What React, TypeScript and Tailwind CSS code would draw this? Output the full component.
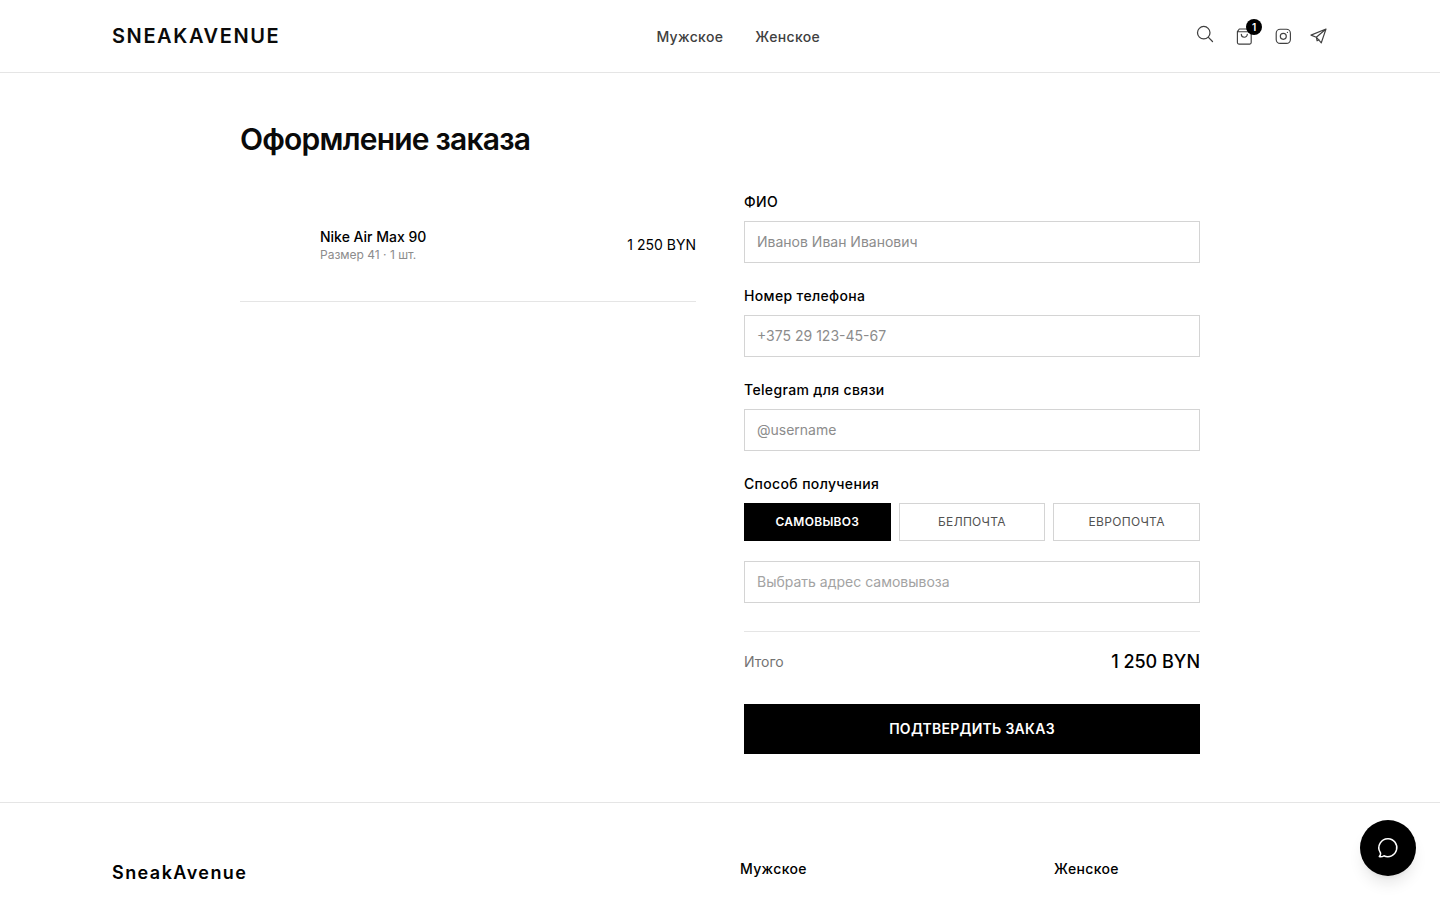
import React from 'react';

const stroke = { fill: 'none', stroke: 'currentColor', strokeWidth: 1.5, strokeLinecap: 'round', strokeLinejoin: 'round' } as const;
const thin = { ...stroke, strokeWidth: 1.15 } as const;

function Field({ label, placeholder }: { label: string; placeholder: string }) {
  return (
    <label className="flex flex-col">
      <span className="h-5 text-sm leading-5 font-medium tracking-[0.35px] text-black">{label}</span>
      <input className="mt-[9px] h-[42px] w-full border border-[#d4d4d4] px-3 pb-0.5 text-sm text-black outline-none placeholder:text-[#8c8c8c]" placeholder={placeholder} />
    </label>
  );
}

function Header() {
  return (
    <header className="h-[73px] border-b border-[#e5e5e5]">
      <div className="mx-auto flex h-[72px] w-[1216px] items-center">
        <a className="w-[544px] text-xl leading-7 font-semibold tracking-[1.6px] text-[#0a0a0a]">SNEAKAVENUE</a>
        <nav className="flex gap-8 pt-0.5 pl-[0.4px] text-sm leading-5 font-medium tracking-[0.35px] text-[#404040]">
          <a>Мужское</a>
          <a>Женское</a>
        </nav>
        <div className="ml-auto flex items-center text-[#404040]">
          <svg className="mr-5 mb-[5px] size-5" viewBox="0 0 24 24" {...stroke}>
            <path d="m21 21-5.197-5.197m0 0A7.5 7.5 0 1 0 5.196 5.196a7.5 7.5 0 0 0 10.607 10.607Z" />
          </svg>
          <div className="relative mr-[21px]">
            <svg className="block size-[18px]" viewBox="0 0 18 18" {...thin}>
              <path d="M4.3 2h10l1.9 2.7v10.9a1.5 1.5 0 0 1-1.5 1.5H3.9a1.5 1.5 0 0 1-1.5-1.5V4.7ZM2.4 4.7h13.8M12.3 7.2a3 3 0 0 1-6 0" />
            </svg>
            <span className="absolute -top-2 left-[11px] flex size-4 items-center justify-center rounded-full bg-black text-[10px] leading-none font-semibold text-white">1</span>
          </div>
          <svg className="mr-[17px] size-[18px]" viewBox="0 0 18 18" {...thin}>
            <rect x="2.2" y="2.2" width="14.2" height="14.2" rx="4" />
            <circle cx="9.3" cy="9.3" r="3" />
            <circle cx="13.4" cy="5.4" r=".65" fill="currentColor" stroke="none" />
          </svg>
          <svg className="mr-px size-[18px]" viewBox="0 0 18 18" {...thin}>
            <path d="M17 2 2 8.1l5.3 2.1 5 5.6ZM17 2 7.3 10.2l.8 3.6 2-1" />
          </svg>
        </div>
      </div>
    </header>
  );
}

export default function App() {
  return (
    <div className="h-[900px] overflow-hidden bg-white font-['Inter',sans-serif] text-black">
      <Header />
      <main className="mx-auto h-[729px] w-[960px] pt-12">
        <h1 className="text-[30px] leading-9 font-semibold tracking-[-0.79px] text-[#0a0a0a]">Оформление заказа</h1>
        <div className="mt-[35px] grid grid-cols-2 gap-12">
          <section className="flex h-[110px] items-center border-b border-[#e5e5e5] pb-1">
            <div className="ml-20">
              <p className="text-sm leading-5 font-medium">Nike Air Max 90</p>
              <p className="text-xs leading-4 text-[#8c8c8c]">Размер 41 · 1 шт.</p>
            </div>
            <span className="ml-auto text-sm">1 250 BYN</span>
          </section>
          <section>
            <div className="flex flex-col gap-[23px]">
              <Field label="ФИО" placeholder="Иванов Иван Иванович" />
              <Field label="Номер телефона" placeholder="+375 29 123-45-67" />
              <Field label="Telegram для связи" placeholder="@username" />
            </div>
            <p className="mt-[23px] text-sm leading-5 font-medium tracking-[0.35px]">Способ получения</p>
            <div className="mt-[9px] grid grid-cols-3 gap-2 text-xs tracking-[0.3px]">
              <button className="h-[38px] bg-black font-semibold text-white">САМОВЫВОЗ</button>
              <button className="h-[38px] border border-[#d4d4d4] text-[#525252]">БЕЛПОЧТА</button>
              <button className="h-[38px] border border-[#d4d4d4] text-[#525252]">ЕВРОПОЧТА</button>
            </div>
            <input className="mt-5 h-[42px] w-full border border-[#d4d4d4] px-3 pb-0.5 text-sm outline-none placeholder:text-[#a3a3a3]" placeholder="Выбрать адрес самовывоза" />
            <div className="mt-7 flex items-center justify-between border-t border-[#e5e5e5] pt-4">
              <span className="text-sm text-[#737373]">Итого</span>
              <span className="text-lg leading-7 font-medium">1 250 BYN</span>
            </div>
            <button className="mt-7 h-[50px] w-full bg-black text-sm font-semibold tracking-[0.28px] text-white">ПОДТВЕРДИТЬ ЗАКАЗ</button>
          </section>
        </div>
      </main>
      <footer className="border-t border-[#e5e5e5]">
        <div className="mx-auto flex w-[1216px] pt-14">
          <div className="w-[628px] text-lg leading-7 font-semibold tracking-[1.44px]">SneakAvenue</div>
          <div className="w-[314px] text-sm leading-5 font-medium tracking-[0.35px]">Мужское</div>
          <div className="text-sm leading-5 font-medium tracking-[0.35px]">Женское</div>
        </div>
      </footer>
      <button className="fixed right-6 bottom-6 flex size-14 items-center justify-center rounded-full bg-black text-white shadow-lg">
        <svg className="size-6" viewBox="0 0 24 24" {...stroke}>
          <path d="M12.2 2.7a9 9 0 1 1-4.3 17.1c-1.4.8-3.1 1.2-4.6.8.9-.9 1.4-2 1.3-3.1-.1-.5-.3-.9-.5-1.3A9 9 0 0 1 12.2 2.7Z" />
        </svg>
      </button>
    </div>
  );
}
